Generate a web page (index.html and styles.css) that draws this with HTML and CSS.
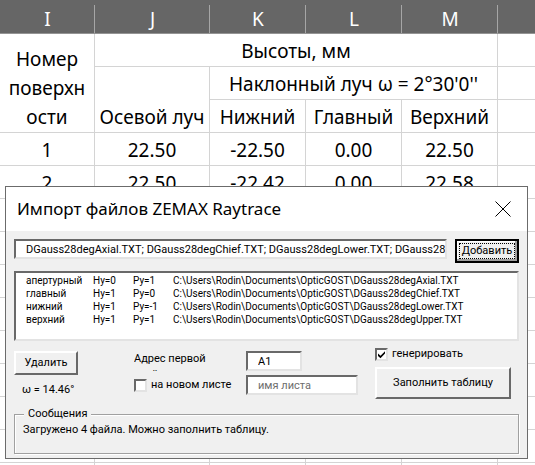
FILE: index.html
```
<!DOCTYPE html>
<html lang="ru">
<head>
<meta charset="utf-8">
<title>Импорт файлов ZEMAX Raytrace</title>
<link rel="stylesheet" href="styles.css">
</head>
<body>
<main class="workbook">
<table class="sheet">
<colgroup><col class="c-num"><col class="c-axis"><col class="c-ray"><col class="c-ray"><col class="c-ray"><col></colgroup>
<thead>
<tr><th><span>I</span></th><th><span>J</span></th><th><span>K</span></th><th><span>L</span></th><th><span>M</span></th><th></th></tr>
</thead>
<tbody>
<tr><td rowspan="3" class="wrap">Номер поверхн ости</td><td colspan="4">Высоты, мм</td><td></td></tr>
<tr><td rowspan="2" class="bottom">Осевой луч</td><td colspan="3">Наклонный луч ω = 2°30'0''</td><td></td></tr>
<tr><td>Нижний</td><td>Главный</td><td>Верхний</td><td></td></tr>
<tr><td>1</td><td>22.50</td><td>-22.50</td><td>0.00</td><td>22.50</td><td></td></tr>
<tr><td>2</td><td>22.50</td><td>-22.42</td><td>0.00</td><td>22.58</td><td></td></tr>
<tr><td></td><td></td><td></td><td></td><td></td><td></td></tr>
<tr><td></td><td></td><td></td><td></td><td></td><td></td></tr>
<tr><td></td><td></td><td></td><td></td><td></td><td></td></tr>
<tr><td></td><td></td><td></td><td></td><td></td><td></td></tr>
<tr><td></td><td></td><td></td><td></td><td></td><td></td></tr>
<tr><td></td><td></td><td></td><td></td><td></td><td></td></tr>
<tr><td></td><td></td><td></td><td></td><td></td><td></td></tr>
<tr><td></td><td></td><td></td><td></td><td></td><td></td></tr>
<tr><td></td><td></td><td></td><td></td><td></td><td></td></tr>
</tbody>
</table>

<section class="dialog" role="dialog" aria-labelledby="dialog-title">
<header class="titlebar">
<h1 id="dialog-title">Импорт файлов ZEMAX Raytrace</h1>
<button class="close" type="button" aria-label="Закрыть"><svg viewBox="0 0 16 16" width="16" height="16"><path d="M.5.5l15 15M15.5.5l-15 15" stroke="#000" fill="none"/></svg></button>
</header>
<form class="form">
<div class="files">
<input class="field" type="text" aria-label="Файлы" value="DGauss28degAxial.TXT; DGauss28degChief.TXT; DGauss28degLower.TXT; DGauss28degUpper.TXT">
<button class="btn default" type="button"><span>Добавить</span></button>
</div>
<div class="list">
<table>
<tbody>
<tr><td>апертурный</td><td>Hy=0</td><td>Py=1</td><td>C:\Users\Rodin\Documents\OpticGOST\DGauss28degAxial.TXT</td></tr>
<tr><td>главный</td><td>Hy=1</td><td>Py=0</td><td>C:\Users\Rodin\Documents\OpticGOST\DGauss28degChief.TXT</td></tr>
<tr><td>нижний</td><td>Hy=1</td><td>Py=-1</td><td>C:\Users\Rodin\Documents\OpticGOST\DGauss28degLower.TXT</td></tr>
<tr><td>верхний</td><td>Hy=1</td><td>Py=1</td><td>C:\Users\Rodin\Documents\OpticGOST\DGauss28degUpper.TXT</td></tr>
</tbody>
</table>
</div>
<div class="options">
<div class="remove">
<button class="btn" type="button">Удалить</button>
<output>ω = 14.46°</output>
</div>
<div class="target">
<label class="address" for="cell">Адрес первой ячейки</label>
<input class="field cell" id="cell" type="text" value="A1">
<label class="check"><input type="checkbox">на новом листе</label>
<input class="field" type="text" aria-label="имя листа" placeholder="имя листа">
</div>
<div class="fill">
<label class="check"><input type="checkbox" checked>генерировать</label>
<button class="btn big" type="button">Заполнить таблицу</button>
</div>
</div>
<fieldset class="messages">
<legend>Сообщения</legend>
<p>Загружено 4 файла. Можно заполнить таблицу.</p>
</fieldset>
</form>
</section>
</main>
</body>
</html>
```
FILE: styles.css
```
* { box-sizing: border-box; }
body {
  margin: 0;
  background: #fff;
  color: #000;
  font-family: "Noto Sans", "Open Sans", sans-serif;
}
.workbook {
  position: relative;
  height: 100vh;
  overflow: hidden;
}

/* Worksheet */
.sheet {
  width: 100%;
  table-layout: fixed;
  border-collapse: separate;
  border-spacing: 0;
  font-size: 19px;
  line-height: 29px;
  text-align: center;
}
.c-num { width: 95px; }
.c-axis { width: 115px; }
.c-ray { width: 96px; }
.sheet th, .sheet td {
  height: 33px;
  padding: 2px 0 0;
  white-space: nowrap;
}
.sheet th {
  height: 34px;
  padding-top: 6px;
  background: linear-gradient(#a6a6a6, #a6a6a6) right bottom / 1px 28px no-repeat #666;
  border-bottom: 1px solid #949494;
  color: #fff;
  font-weight: 400;
  line-height: 27px;
}
.sheet th:last-child { background: #666; }
.sheet td {
  border-right: 1px solid #d4d4d4;
  border-bottom: 1px solid #d4d4d4;
}
.sheet td:last-child { border-right: 0; }
.sheet .bottom { vertical-align: bottom; }
.sheet .wrap {
  padding: 0 7px;
  vertical-align: bottom;
  white-space: normal;
}

/* Dialog window */
.dialog {
  position: absolute;
  top: 186px;
  left: 5px;
  right: 7px;
  border: 1px solid #6b6b6b;
  background: #f0f0f0;
  font-size: 11px;
  line-height: 16px;
}
.titlebar {
  display: flex;
  align-items: center;
  justify-content: space-between;
  height: 44px;
  padding: 0 16px 0 11px;
  background: #fff;
}
.titlebar h1 {
  margin: 0;
  font-size: 17px;
  font-weight: 400;
  line-height: 24px;
}
.close {
  display: flex;
  padding: 0;
  border: 0;
  background: none;
}
.form {
  padding: 8px 8px 4px;
  font-family: Roboto, "Liberation Sans", sans-serif;
}

/* Shared controls */
.field {
  width: 100%;
  min-width: 0;
  height: 20px;
  padding: 0 0 0 10px;
  border: 2px solid;
  border-color: #696969 #e3e3e3 #e3e3e3 #696969;
  border-radius: 0;
  outline: 0;
  background: #fff;
  color: #000;
  font: inherit;
}
.field::placeholder { color: #6d6d6d; }
.btn {
  height: 24px;
  padding: 0;
  border: 2px solid;
  border-color: #fff #696969 #696969 #fff;
  border-radius: 0;
  background: #f0f0f0;
  color: #000;
  font: inherit;
}
.check {
  display: flex;
  align-items: center;
  gap: 4px;
  white-space: nowrap;
}
.check input {
  appearance: none;
  width: 13px;
  height: 13px;
  margin: 0;
  border: 2px solid;
  border-color: #696969 #e3e3e3 #e3e3e3 #696969;
  background: #fff;
}
.check input:checked {
  background-image: url("data:image/svg+xml,%3Csvg xmlns='http://www.w3.org/2000/svg' viewBox='0 0 9 9'%3E%3Cpath d='M1 3.5v2.4L3.5 8.3 8 3.6V1.2L3.5 5.7z'/%3E%3C/svg%3E");
}

/* File selection */
.files {
  display: flex;
  gap: 8px;
}
.btn.default {
  flex: 0 0 64px;
  padding: 2px;
  border-color: #000;
  box-shadow: inset -2px -2px #a0a0a0, inset 1px 1px #fff;
}
.btn.default span {
  display: block;
  height: 16px;
  line-height: 14px;
  border: 1px dotted #000;
}
.list {
  height: 70px;
  margin-top: 8px;
  padding: 1px 0 0 10px;
  border: 2px solid;
  border-color: #696969 #e3e3e3 #e3e3e3 #696969;
  background: #fff;
}
.list table {
  border-collapse: collapse;
  font-size: 10px;
  line-height: 13px;
}
.list td {
  padding: 0;
  white-space: nowrap;
}
.list td:first-child {
  display: block;
  width: 57px;
  margin-right: 10px;
  overflow: hidden;
}
.list td:nth-child(2), .list td:nth-child(3) { min-width: 40px; }

/* Options */
.options {
  display: flex;
  height: 60px;
  margin-top: 5px;
  padding-right: 8px;
}
.remove {
  display: flex;
  flex: 0 0 120px;
  flex-direction: column;
  gap: 7px;
  padding-top: 5px;
}
.remove .btn { width: 64px; }
.remove output { padding-left: 8px; }
.target {
  display: grid;
  grid-template-columns: 112px 112px;
  grid-template-rows: 20px 20px;
  row-gap: 4px;
  padding-top: 5px;
}
.address {
  width: 88px;
  height: 20px;
  overflow: hidden;
}
.cell { width: 56px; }
.fill {
  display: flex;
  flex-direction: column;
  gap: 5px;
  width: 136px;
  margin-left: auto;
}
.btn.big { height: 32px; }

/* Messages */
.messages {
  min-width: 0;
  margin: 0;
  padding: 0 8px 15px;
  border: 1px solid #a0a0a0;
  box-shadow: 1px 1px #fff, inset 1px 1px #fff;
}
.messages legend {
  margin-left: 1px;
  padding: 0 4px;
  background: #f0f0f0;
}
.messages p { margin: 0; }
```
